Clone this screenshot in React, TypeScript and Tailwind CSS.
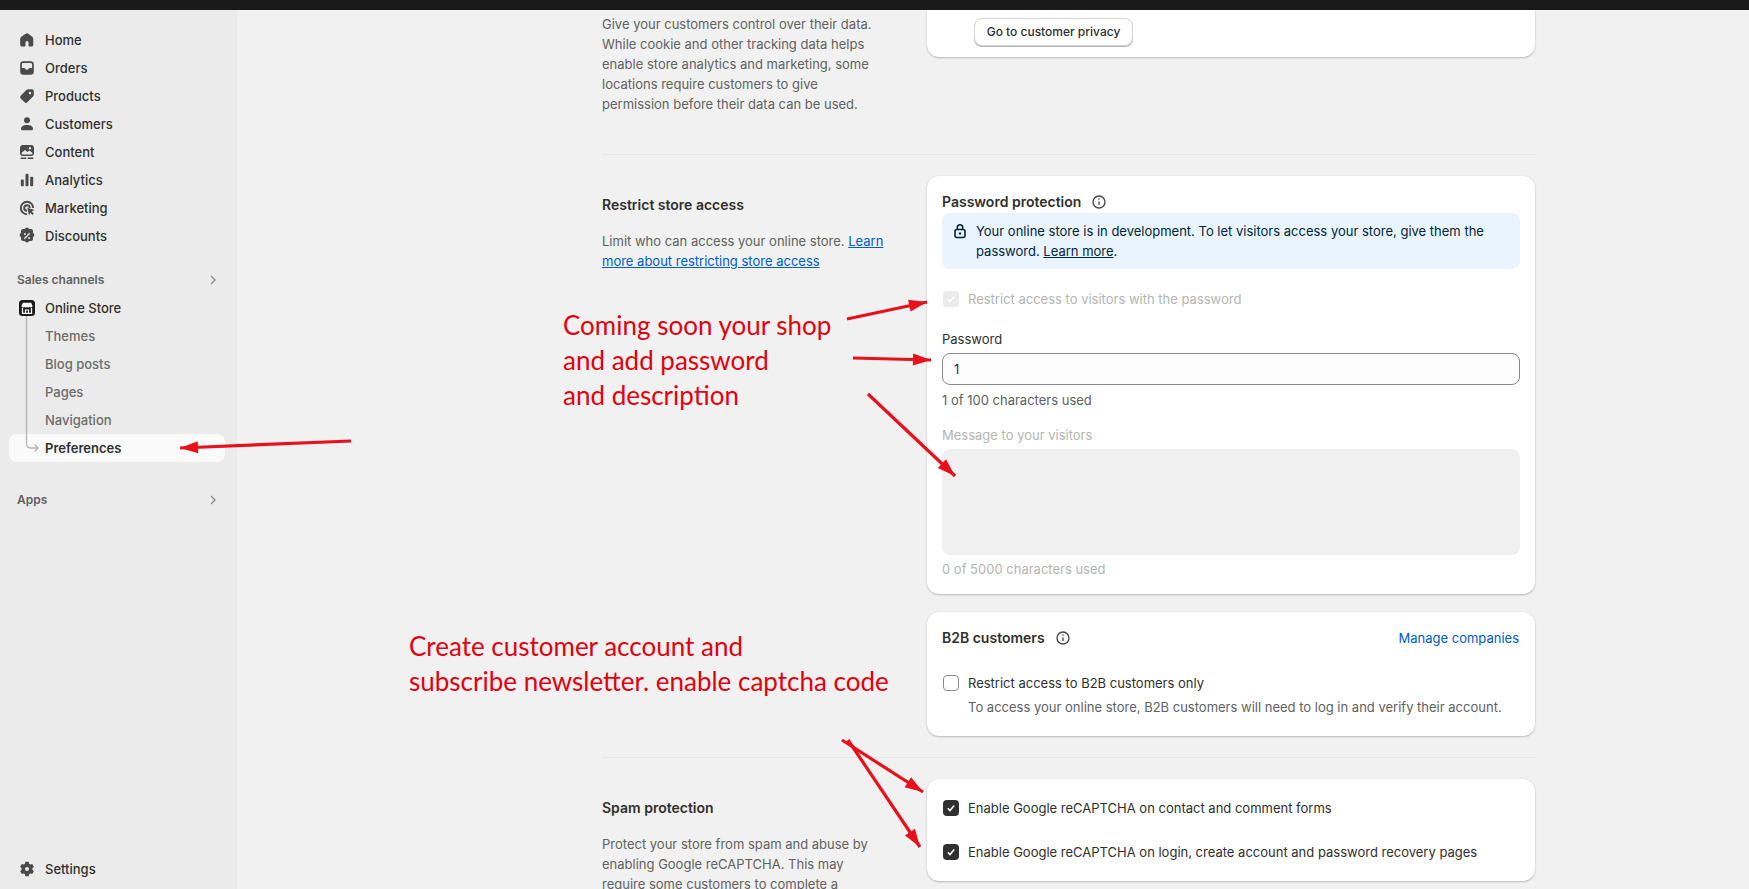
import type { ReactNode } from "react";

const font = "font-['Inter','Liberation_Sans',sans-serif]";

function Icon({ children }: { children: ReactNode }) {
  return (
    <svg viewBox="0 0 20 20" className="h-5 w-5 shrink-0 fill-[#4a4a4a]">
      {children}
    </svg>
  );
}

const navItems: { label: string; icon: ReactNode }[] = [
  {
    label: "Home",
    icon: <path d="M8.300 3.900a2.700 2.700 0 0 1 3.400 0l3.500 2.800c.7.500 1.100 1.300 1.100 2.200v5.800c0 1-.8 1.800-1.800 1.800h-1.700c-.7 0-1.300-.6-1.300-1.300v-2.700a1.500 1.500 0 0 0-3 0v2.700c0 .7-.6 1.300-1.300 1.300H5c-1 0-1.800-.8-1.800-1.800V8.900c0-.9.400-1.700 1.100-2.200z" />,
  },
  {
    label: "Orders",
    icon: <path fillRule="evenodd" d="M6.200 3.200h7.600a3 3 0 0 1 3 3v7.600a3 3 0 0 1-3 3H6.200a3 3 0 0 1-3-3V6.200a3 3 0 0 1 3-3M4.900 6.200V10h2.300c.6 0 1 .3 1.200.8.200.6.800.9 1.600.9s1.400-.3 1.600-.9c.2-.5.600-.8 1.200-.8h2.300V6.200c0-.7-.6-1.300-1.300-1.300H6.200c-.7 0-1.300.6-1.300 1.300" />,
  },
  {
    label: "Products",
    icon: <path fillRule="evenodd" d="M11.300 3.200h3.600c1 0 1.900.9 1.900 1.900v3.600c0 .7-.3 1.400-.8 1.900l-5.700 5.700a2 2 0 0 1-2.800 0l-3.800-3.800a2 2 0 0 1 0-2.800L9.400 4c.5-.5 1.200-.8 1.900-.8M13 8.200a1.200 1.200 0 1 0 0-2.400 1.200 1.200 0 0 0 0 2.400" />,
  },
  {
    label: "Customers",
    icon: (
      <>
        <circle cx="10" cy="6.300" r="3" />
        <path d="M4 14.700c0-2.300 2.500-3.700 6-3.700s6 1.400 6 3.700c0 1-.8 1.600-1.600 1.600H5.600C4.800 16.300 4 15.700 4 14.700" />
      </>
    ),
  },
  {
    label: "Content",
    icon: <path fillRule="evenodd" d="M5.800 3h8.400C15.700 3 17 4.200 17 5.800v5.400c0 1.500-1.300 2.800-2.800 2.800H5.800C4.300 14 3 12.700 3 11.200V5.800C3 4.300 4.300 3 5.800 3M4.500 11c.2 1 .7 1.500 1.500 1.500h8c.8 0 1.300-.5 1.500-1.500l-3-2.500-2 1.500-2.500-2zM13 7.500a1.200 1.200 0 1 0 0-2.400 1.200 1.200 0 0 0 0 2.400M3.700 15.500h5.600V17H3.700zm7 0h5.600V17h-5.600z" />,
  },
  {
    label: "Analytics",
    icon: (
      <>
        <rect x="3.800" y="9.500" width="3" height="6.800" rx="1" />
        <rect x="8.500" y="3.800" width="3" height="12.500" rx="1" />
        <rect x="13.200" y="6.800" width="3" height="9.500" rx="1" />
      </>
    ),
  },
  {
    label: "Marketing",
    icon: <path fillRule="evenodd" d="M10 2.800a7.200 7.200 0 0 1 7.200 7.200h-2a5.200 5.200 0 1 0-5.200 5.200v2a7.200 7.200 0 0 1 0-14.400m0 3.400a3.800 3.800 0 0 1 3.800 3.800h-2a1.800 1.800 0 1 0-1.800 1.800v2a3.800 3.800 0 0 1 0-7.600m.3 3.500 7.200 2.400-2.900 1.300 2.200 2.200-1.300 1.300-2.200-2.200-1.300 2.900z" />,
  },
  {
    label: "Discounts",
    icon: <path fillRule="evenodd" d="M8.200 2.500a2.500 2.500 0 0 1 3.600 0l.6.600.9-.1a2.500 2.500 0 0 1 2.700 2.700l-.1.900.6.600a2.500 2.500 0 0 1 0 3.600l-.6.600.1.900a2.500 2.500 0 0 1-2.700 2.700l-.9-.1-.6.600a2.500 2.500 0 0 1-3.600 0l-.6-.6-.9.100a2.500 2.500 0 0 1-2.700-2.700l.1-.9-.6-.6a2.500 2.500 0 0 1 0-3.600l.6-.6-.1-.9A2.500 2.500 0 0 1 6.700 3l.9.100zM12.300 6.800l-5.500 5.500.9.900 5.500-5.500zM8 9a1 1 0 1 0 0-2 1 1 0 0 0 0 2m4 4a1 1 0 1 0 0-2 1 1 0 0 0 0 2" />,
  },
];

function Gear() {
  return (
    <Icon>
      <path fillRule="evenodd" d="M8.300 2.800h3.400l.4 2 1.200.7 1.900-.6 1.700 2.900-1.500 1.400v1.600l1.500 1.400-1.700 2.900-1.900-.6-1.200.7-.4 2H8.300l-.4-2-1.200-.7-1.900.6-1.700-2.900 1.500-1.400V9.200L3.100 7.800l1.700-2.900 1.900.6 1.200-.7zM10 12a2 2 0 1 0 0-4 2 2 0 0 0 0 4" />
    </Icon>
  );
}

function Chevron() {
  return (
    <svg viewBox="0 0 8 12" className="h-3 w-2 fill-none stroke-[#8a8a8a] stroke-[1.300]">
      <path d="M2 2l4 4-4 4" />
    </svg>
  );
}

function Info() {
  return (
    <svg viewBox="0 0 20 20" className="h-5 w-5 fill-none stroke-[#4a4a4a] stroke-[1.400]">
      <circle cx="10" cy="10" r="6" />
      <path d="M10 9.500v3.500" />
      <circle cx="10" cy="7" r=".8" className="fill-[#4a4a4a] stroke-none" />
    </svg>
  );
}

function Checkbox({ state }: { state: "on" | "off" | "disabled" }) {
  if (state === "off") {
    return <span className="h-4 w-4 shrink-0 rounded-[4px] border border-[#8a8a8a] bg-white" />;
  }
  return (
    <span className={`flex h-4 w-4 shrink-0 items-center justify-center rounded-[4px] ${state === "on" ? "bg-[#303030]" : "bg-[#ebebeb]"}`}>
      <svg viewBox="0 0 16 16" className="h-4 w-4 fill-none stroke-white stroke-[1.600]">
        <path d="M4.800 8.300 7 10.500l4.200-5" />
      </svg>
    </span>
  );
}

function Sidebar() {
  return (
    <aside className="flex h-full w-[237px] shrink-0 flex-col bg-[#ebebeb] pt-4 pr-3 pb-[6px] pl-[9px] text-[13px] leading-5 font-[450] text-[#303030]">
      {navItems.map((item) => (
        <div key={item.label} className="flex h-7 items-center gap-2 pl-2">
          <Icon>{item.icon}</Icon>
          <span>{item.label}</span>
        </div>
      ))}

      <div className="mt-4 flex h-7 items-center justify-between pr-2 pl-2 text-xs font-[600] text-[#616161]">
        <span>Sales channels</span>
        <Chevron />
      </div>

      <div className="relative">
        <div className="flex h-7 items-center gap-2 pl-2">
          <svg viewBox="0 0 20 20" className="h-5 w-5 shrink-0">
            <rect x="2" y="2" width="16" height="16" rx="3.500" fill="#1a1a1a" />
            <path d="M5.800 4.800h8.400L15.500 8a1.500 1.500 0 0 1-2.800.7 1.700 1.700 0 0 1-2.700 0 1.700 1.700 0 0 1-2.700 0A1.500 1.500 0 0 1 4.500 8z" fill="#fff" />
            <path d="M5.500 10v5.300h9V10" fill="none" stroke="#fff" strokeWidth="1.300" />
            <path d="M8.500 15.300v-3.300h3v3.300" fill="none" stroke="#fff" strokeWidth="1.200" />
          </svg>
          <span>Online Store</span>
        </div>
        {["Themes", "Blog posts", "Pages", "Navigation"].map((label) => (
          <div key={label} className="flex h-7 items-center pl-9 text-[#6b6b6b]">
            {label}
          </div>
        ))}
        <div className="flex h-7 items-center rounded-lg bg-[#fafafa] pl-9 font-[600]">Preferences</div>
        <svg viewBox="0 0 24 138" className="absolute top-[22px] left-[14px] h-[138px] w-6 fill-none stroke-[#b5b5b5] stroke-[1.400]">
          <path d="M3.500 0v127c0 3 1 5 4 5h7.500M11.500 128.500l3.700 3.500-3.700 3.500" />
        </svg>
      </div>

      <div className="mt-6 flex h-7 items-center justify-between pr-2 pl-2 text-xs font-[600] text-[#616161]">
        <span>Apps</span>
        <Chevron />
      </div>

      <div className="mt-auto flex h-7 items-center gap-2 pl-2">
        <Gear />
        <span>Settings</span>
      </div>
    </aside>
  );
}

const card = "rounded-xl bg-white shadow-[0_1px_2px_rgba(0,0,0,0.22),0_0_1px_rgba(0,0,0,0.12)]";
const link = "text-[#005bd3] underline";
const cardTitle = "flex items-center gap-2 text-sm font-[600]";

function Settings() {
  return (
    <main className="min-w-0 flex-1 overflow-hidden pl-[365px] text-[13px] leading-5 font-[420] text-[#303030]">
      <div className="w-[934px]">
        <section className="flex gap-[41px] pb-10">
          <p className="w-[284px] shrink-0 pt-1 text-[#616161]">
            Give your customers control over their data. While cookie and other tracking data helps enable store analytics and marketing, some locations require customers to give permission before their data can be used.
          </p>
          <div className={`${card} h-[47px] w-[608px] rounded-t-none pt-2 pl-[47px]`}>
            <button className="h-7 w-[159px] rounded-lg border border-[#d4d4d4] bg-white text-xs font-[500] shadow-[0_1px_0_#b5b5b5]">Go to customer privacy</button>
          </div>
        </section>

        <div className="h-px bg-[#e6e6e6]" />

        <section className="flex gap-[41px] pt-[21px]">
          <div className="w-[284px] shrink-0 pt-[19px]">
            <h2 className="text-sm font-[600]">Restrict store access</h2>
            <p className="mt-4 text-[#616161]">
              Limit who can access your online store. <span className={link}>Learn more about restricting store access</span>
            </p>
          </div>
          <div className="flex w-[608px] flex-col gap-[18px]">
            <div className={`${card} px-[15px] pt-4 pb-[15px]`}>
              <div className={cardTitle}>
                Password protection
                <Info />
              </div>
              <div className="mt-px flex gap-[6px] rounded-lg bg-[#eaf4ff] py-2 pr-6 pl-2 text-[#00263d]">
                <svg viewBox="0 0 20 20" className="h-5 w-5 shrink-0 fill-none stroke-[#00263d] stroke-[1.600]">
                  <path d="M7.300 8.500V6.500a2.700 2.700 0 0 1 5.400 0v2" />
                  <rect x="5" y="8.500" width="10" height="8" rx="2" />
                  <circle cx="10" cy="12.500" r="1.200" className="fill-[#00263d] stroke-none" />
                </svg>
                <p>
                  Your online store is in development. To let visitors access your store, give them the password. <span className="underline">Learn more</span>.
                </p>
              </div>
              <div className="mt-5 ml-px flex items-center gap-[9px] text-[#b5b5b5]">
                <Checkbox state="disabled" />
                Restrict access to visitors with the password
              </div>
              <div className="mt-5">Password</div>
              <div className="mt-1 flex h-8 items-center rounded-lg border border-[#8a8a8a] bg-[#fdfdfd] px-[11px]">1</div>
              <div className="mt-[5px] text-[#616161]">1 of 100 characters used</div>
              <div className="mt-[15px] text-[#b5b5b5]">Message to your visitors</div>
              <div className="mt-1 h-[106px] rounded-lg bg-[#f0f0f0]" />
              <div className="mt-1 text-[#b5b5b5]">0 of 5000 characters used</div>
            </div>

            <div className={`${card} pt-4 pr-4 pb-[19px] pl-[15px]`}>
              <div className="flex items-center justify-between">
                <div className={cardTitle}>
                  B2B customers
                  <Info />
                </div>
                <span className="text-[#005bd3]">Manage companies</span>
              </div>
              <div className="mt-[25px] ml-px flex items-center gap-[9px]">
                <Checkbox state="off" />
                Restrict access to B2B customers only
              </div>
              <div className="mt-1 pl-[26px] text-[#616161]">To access your online store, B2B customers will need to log in and verify their account.</div>
            </div>
          </div>
        </section>

        <div className="mt-[21px] h-px bg-[#e6e6e6]" />

        <section className="flex gap-[41px] pt-[21px]">
          <div className="w-[284px] shrink-0 pt-[19px]">
            <h2 className="text-sm font-[600]">Spam protection</h2>
            <p className="mt-[16px] text-[#616161]">
              Protect your store from spam and abuse by enabling Google reCAPTCHA. This may require some customers to complete a CAPTCHA task.
            </p>
          </div>
          <div className={`${card} flex h-[102px] w-[608px] flex-col gap-6 px-4 pt-[19px]`}>
            <div className="flex items-center gap-[9px]">
              <Checkbox state="on" />
              Enable Google reCAPTCHA on contact and comment forms
            </div>
            <div className="flex items-center gap-[9px]">
              <Checkbox state="on" />
              Enable Google reCAPTCHA on login, create account and password recovery pages
            </div>
          </div>
        </section>
      </div>
    </main>
  );
}

// red arrows someone drew on the screenshot: [fromX, fromY, toX, toY]
const arrows = [
  [351, 441, 180, 448],
  [847, 319, 927, 302],
  [853, 358, 931, 360],
  [868, 394, 955, 476],
  [842, 740, 923, 792],
  [848, 740, 920, 847],
];

function arrowHead(x1: number, y1: number, x2: number, y2: number) {
  const len = Math.hypot(x2 - x1, y2 - y1);
  const ux = (x2 - x1) / len;
  const uy = (y2 - y1) / len;
  const bx = x2 - ux * 18;
  const by = y2 - uy * 18;
  return `${x2},${y2} ${bx - uy * 6},${by + ux * 6} ${bx + uy * 6},${by - ux * 6}`;
}

function Annotations() {
  return (
    <>
      <svg viewBox="0 0 1749 889" className="pointer-events-none absolute inset-0 h-[889px] w-[1749px]">
        {arrows.map(([x1, y1, x2, y2]) => (
          <g key={`${x1}-${y1}`}>
            <line x1={x1} y1={y1} x2={x2} y2={y2} stroke="#e8101a" strokeWidth="3.200" />
            <polygon points={arrowHead(x1, y1, x2, y2)} fill="#e8101a" />
          </g>
        ))}
      </svg>
      <div className="absolute top-[308px] left-[563px] font-['Lato',sans-serif] text-[26px] leading-[35px] text-[#e2000f]">
        Coming soon your shop
        <br />
        and add password
        <br />
        and description
      </div>
      <div className="absolute top-[629px] left-[409px] font-['Lato',sans-serif] text-[26px] leading-[35px] whitespace-nowrap text-[#e2000f]">
        Create customer account and
        <br />
        subscribe newsletter. enable captcha code
      </div>
    </>
  );
}

export default function App() {
  return (
    <div className={`${font} relative flex h-[889px] w-full flex-col overflow-hidden bg-[#f1f1f1]`}>
      <div className="h-[10px] shrink-0 bg-[#1a1a1a]" />
      <div className="flex min-h-0 flex-1">
        <Sidebar />
        <Settings />
      </div>
      <Annotations />
    </div>
  );
}
